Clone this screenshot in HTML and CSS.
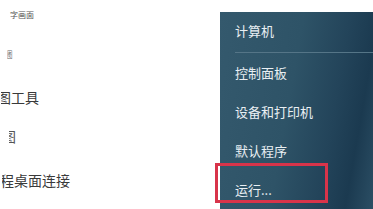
FILE: index.html
```html
<!DOCTYPE html>
<html lang="zh-CN">
<head>
    <meta charset="UTF-8">
    <title>开始菜单</title>
    <link rel="stylesheet" href="styles.css">
</head>
<body>
    <div class="screen">
        <div class="programs">
            <div class="prog tiny">字画面</div>
            <div class="prog thin">图</div>
            <div class="prog cut"><span class="clip">图</span>工具</div>
            <div class="prog partial"><span class="clip">图</span></div>
            <div class="prog cut-last"><span class="clip">程</span>桌面连接</div>
        </div>
        <div class="panel">
            <div class="item first">计算机</div>
            <div class="sep"></div>
            <div class="item">控制面板</div>
            <div class="item">设备和打印机</div>
            <div class="item">默认程序</div>
            <div class="item run">运行...
                <span class="mark"></span>
            </div>
        </div>
    </div>
</body>
</html>
```

FILE: styles.css
```css
body {
    margin: 0;
    background: #fff;
    font-family: "Noto Sans CJK SC", "Noto Sans", sans-serif;
}
.screen {
    display: flex;
    width: 373px;
    height: 209px;
    overflow: hidden;
}
.programs {
    width: 220px;
    flex-shrink: 0;
    overflow: hidden;
    color: #3a3a3a;
}
.prog {
    white-space: nowrap;
    font-size: 14px;
    height: 40px;
    line-height: 40px;
}
.clip {
    display: inline-block;
    width: 10px;
    overflow: hidden;
    direction: rtl;
    vertical-align: top;
}
.prog.tiny {
    font-size: 8px;
    height: 30px;
    line-height: 30px;
    padding-left: 10px;
    color: #555;
}
.prog.thin {
    font-size: 9px;
    height: 45px;
    line-height: 50px;
    margin-left: 7px;
    color: #666;
    transform: scaleX(0.6);
    transform-origin: left center;
}
.prog.cut {
    height: 40px;
    line-height: 44px;
    padding-left: 1px;
}
.prog.partial {
    height: 40px;
    line-height: 42px;
    padding-left: 9px;
    color: #555;
}
.prog.partial .clip {
    width: 7px;
}
.prog.cut-last {
    height: 54px;
    line-height: 50px;
    padding-left: 2px;
}
.prog.cut-last .clip {
    width: 12px;
}
.panel {
    flex: 1;
    margin-top: 12px;
    background: linear-gradient(100deg, #34596d 0%, #2e5367 45%, #23445a 70%, #1b3a50 85%, #2b4e64 100%);
    color: #e9eff3;
    font-size: 13px;
}
.item {
    position: relative;
    height: 39px;
    line-height: 39px;
    padding-left: 15px;
}
.item.first {
    height: 38px;
    line-height: 38px;
}
.sep {
    height: 1px;
    margin: 2px 0 0 15px;
    background: #557587;
}
.mark {
    position: absolute;
    left: -5px;
    top: -7px;
    width: 107px;
    height: 34px;
    border: 3px solid #d8344a;
}
```
